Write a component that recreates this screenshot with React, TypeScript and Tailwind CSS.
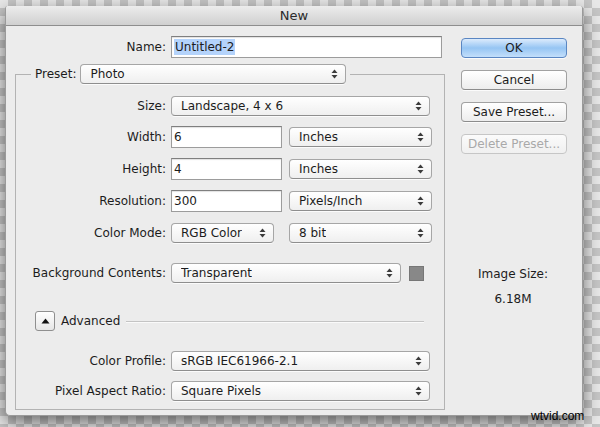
import clsx from "clsx";

type PopupProps = {
  label: string;
  className: string;
};

function Arrows() {
  return (
    <svg width="7" height="10" viewBox="0 0 7 10" aria-hidden="true">
      <path d="M0.5 4 L3.5 0.5 L6.5 4 Z" fill="#3c3c3c" />
      <path d="M0.5 6 L3.5 9.5 L6.5 6 Z" fill="#3c3c3c" />
    </svg>
  );
}

function Popup({ label, className }: PopupProps) {
  return (
    <div
      className={clsx(
        "flex h-[20px] shrink-0 items-center justify-between rounded-[4px] border border-[#a6a6a6] border-b-[#8e8e8e] bg-linear-to-b from-white to-[#efefef] pr-[7px] pl-[9px] shadow-[0_1px_0_rgba(255,255,255,0.8)]",
        className,
      )}
    >
      <span className="truncate">{label}</span>
      <Arrows />
    </div>
  );
}

function Field({ children, className }: { children: React.ReactNode; className: string }) {
  return (
    <div
      className={clsx(
        "flex h-[22px] shrink-0 items-center border border-[#9c9c9c] border-t-[#7f7f7f] bg-white pl-[2px] shadow-[inset_0_1px_1px_rgba(0,0,0,0.12)]",
        className,
      )}
    >
      {children}
    </div>
  );
}

function Row({ label, mt, children }: { label: string; mt: string; children: React.ReactNode }) {
  return (
    <div className={clsx("flex h-[22px] items-center", mt)}>
      <span className="w-[155px] shrink-0 pr-[5px] text-right">{label}</span>
      {children}
    </div>
  );
}

function Button({ label, variant }: { label: string; variant?: "default" | "disabled" }) {
  return (
    <div
      className={clsx(
        "h-[20px] w-[106px] rounded-[4px] border text-center leading-[18px]",
        variant === "default" &&
          "border-[#5a86c2] bg-linear-to-b from-[#dcebfc] via-[#96c5f3] to-[#c3dffb] shadow-[0_1px_0_rgba(255,255,255,0.8)]",
        variant === "disabled" && "border-[#c6c6c6] bg-linear-to-b from-[#fbfbfb] to-[#f0f0f0] text-[#a9a9a9]",
        !variant && "border-[#a1a1a1] border-b-[#8c8c8c] bg-linear-to-b from-white to-[#ededed] shadow-[0_1px_0_rgba(255,255,255,0.8)]",
      )}
    >
      {label}
    </div>
  );
}

export default function App() {
  return (
    <div className="relative h-[427px] w-[600px] overflow-hidden bg-[repeating-conic-gradient(#c6c6c6_0_25%,#e8e8e8_0_50%)] bg-[length:16px_16px] pt-[6px] pl-[5px] font-['DejaVu_Sans',sans-serif] text-[12px] leading-[16px] text-[#1c1c1c]">
      <div className="flex h-[410px] w-[578px] flex-col overflow-hidden rounded-t-[3px] rounded-b-[5px] border-x border-b border-[#9a9a9a] bg-[#ececec] shadow-[0_6px_18px_rgba(0,0,0,0.55)]">
        <div className="flex h-[20px] shrink-0 items-center justify-center border-b border-[#8e8e8e] bg-linear-to-b from-[#ececec] to-[#d0d0d0] text-[13px] text-[#2b2b2b]">
          New
        </div>

        <div className="flex flex-1">
          <div className="w-[438px] shrink-0">
            <div className="mt-[10px] flex h-[22px] items-center">
              <span className="w-[165px] shrink-0 pr-[5px] text-right">Name:</span>
              <Field className="w-[271px]">
                <span className="bg-[#b4d3fb] px-[1px]">Untitled-2</span>
              </Field>
            </div>

            <fieldset className="mt-[6px] ml-[9px] w-[430px] border border-[#b3b3b3] pb-[7px]">
              <legend className="ml-[15px] flex items-center px-[4px]">
                <span className="mr-[4px]">Preset:</span>
                <Popup label="Photo" className="w-[266px]" />
              </legend>

              <Row label="Size:" mt="mt-[11px]">
                <Popup label="Landscape, 4 x 6" className="w-[259px]" />
              </Row>
              <Row label="Width:" mt="mt-[9px]">
                <Field className="w-[111px]">6</Field>
                <Popup label="Inches" className="ml-[7px] w-[143px]" />
              </Row>
              <Row label="Height:" mt="mt-[10px]">
                <Field className="w-[111px]">4</Field>
                <Popup label="Inches" className="ml-[7px] w-[143px]" />
              </Row>
              <Row label="Resolution:" mt="mt-[10px]">
                <Field className="w-[111px]">300</Field>
                <Popup label="Pixels/Inch" className="ml-[7px] w-[143px]" />
              </Row>
              <Row label="Color Mode:" mt="mt-[10px]">
                <Popup label="RGB Color" className="w-[103px]" />
                <Popup label="8 bit" className="ml-[15px] w-[143px]" />
              </Row>
              <Row label="Background Contents:" mt="mt-[18px]">
                <Popup label="Transparent" className="w-[230px]" />
                <div className="ml-[8px] h-[15px] w-[15px] border border-[#777] bg-[#888]" />
              </Row>

              <div className="mt-[26px] flex h-[22px] items-center pl-[19px]">
                <div className="flex h-[20px] w-[20px] items-center justify-center rounded-[3px] border border-[#8f8f8f] bg-linear-to-b from-white to-[#e6e6e6]">
                  <svg width="9" height="6" viewBox="0 0 9 6" aria-hidden="true">
                    <path d="M0.5 5.5 L4.5 0.5 L8.5 5.5 Z" fill="#111" />
                  </svg>
                </div>
                <span className="ml-[6px]">Advanced</span>
                <div className="mr-[20px] ml-[6px] h-px flex-1 bg-[#c4c4c4] shadow-[0_1px_0_#fafafa]" />
              </div>

              <Row label="Color Profile:" mt="mt-[18px]">
                <Popup label="sRGB IEC61966-2.1" className="w-[259px]" />
              </Row>
              <Row label="Pixel Aspect Ratio:" mt="mt-[8px]">
                <Popup label="Square Pixels" className="w-[259px]" />
              </Row>
            </fieldset>
          </div>

          <div className="flex flex-1 flex-col items-center">
            <div className="mt-[12px] ml-[2px] flex flex-col gap-[12px]">
              <Button label="OK" variant="default" />
              <Button label="Cancel" />
              <Button label="Save Preset..." />
              <Button label="Delete Preset..." variant="disabled" />
            </div>
            <div className="mt-[112px]">Image Size:</div>
            <div className="mt-[9px]">6.18M</div>
          </div>
        </div>
      </div>

      <span className="absolute top-[408px] left-[531px] font-['Liberation_Sans',sans-serif] text-[12px] text-black">
        wtvid.com
      </span>
    </div>
  );
}
